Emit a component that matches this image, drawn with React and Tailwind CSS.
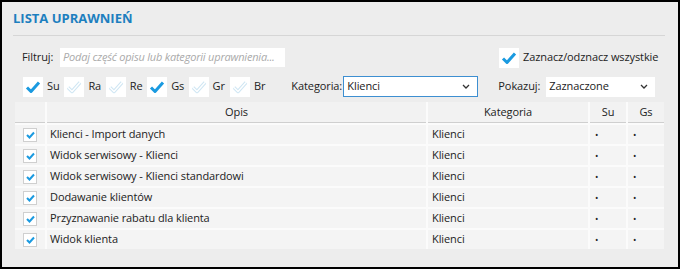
import React from "react";

const font = { fontFamily: '"Open Sans", "Noto Sans", sans-serif' };

const rows = [
  "Klienci - Import danych",
  "Widok serwisowy - Klienci",
  "Widok serwisowy - Klienci standardowi",
  "Dodawanie klientów",
  "Przyznawanie rabatu dla klienta",
  "Widok klienta",
];

const flags = [
  { label: "Su", on: true },
  { label: "Ra", on: false },
  { label: "Re", on: false },
  { label: "Gs", on: true },
  { label: "Gr", on: false },
  { label: "Br", on: false },
];

// big white check box used in the filter bar
const BigCheck = ({ on }) => (
  <div className="w-[20px] h-[20px] bg-white flex items-center justify-center shrink-0">
    <svg width="16" height="14" viewBox="0 0 16 14">
      {on ? (
        <path d="M2 7.5 L6 11.5 L14 2.5" fill="none" stroke="#1a9ae0" strokeWidth="3" strokeLinejoin="round" />
      ) : (
        <>
          <path d="M2 7.5 L6 11.5 L14 2.5" fill="none" stroke="#cfe6f3" strokeWidth="3.4" strokeLinejoin="round" />
          <path d="M2 7.5 L6 11.5 L14 2.5" fill="none" stroke="#ffffff" strokeWidth="1.4" strokeLinejoin="round" />
        </>
      )}
    </svg>
  </div>
);

const SmallCheck = () => (
  <div className="w-[14px] h-[14px] bg-white border border-[#cfcfcf] flex items-center justify-center">
    <svg width="9" height="8" viewBox="0 0 9 8">
      <path d="M1 4 L3.5 6.5 L8 1.5" fill="none" stroke="#1a9ae0" strokeWidth="2" />
    </svg>
  </div>
);

const Chevron = () => (
  <svg width="8" height="5" viewBox="0 0 8 5" className="shrink-0">
    <path d="M1 1 L4 4 L7 1" fill="none" stroke="#333" strokeWidth="1.3" />
  </svg>
);

export default function App() {
  return (
    <div className="w-[682px] h-[270px] bg-white text-[11px] tracking-[-0.1px] text-[#222]" style={font}>
      <div className="w-[680px] h-[269px] border-2 border-black bg-[#ededed] pl-[11px] pr-[13px]">
        {/* Title */}
        <div className="h-[33px] flex items-center">
          <h2 className="text-[13px] font-bold text-[#1d7fbf] tracking-normal">LISTA UPRAWNIEŃ</h2>
        </div>
        <div className="h-px bg-[#d6d6d6]" />

        {/* Filter row */}
        <div className="mt-[11px] h-[21px] flex items-center">
          <span className="ml-[9px] w-[38px] shrink-0">Filtruj:</span>
          <div className="w-[225px] h-[19px] bg-white flex items-center px-[3px] text-[#aaa] italic tracking-[-0.2px] whitespace-nowrap overflow-hidden shrink-0">
            Podaj część opisu lub kategorii uprawnienia...
          </div>
          <div className="ml-[214px] flex items-center gap-[4px]">
            <BigCheck on />
            <span className="whitespace-nowrap">Zaznacz/odznacz wszystkie</span>
          </div>
        </div>

        {/* Flags row */}
        <div className="mt-[8px] h-[21px] flex items-center pl-[10px]">
          {flags.map((f) => (
            <div key={f.label} className="w-[41.4px] flex items-center gap-[4px] shrink-0">
              <BigCheck on={f.on} />
              <span>{f.label}</span>
            </div>
          ))}
          <span className="ml-[20px] w-[52px] whitespace-nowrap shrink-0">Kategoria:</span>
          <div className="w-[135px] h-[21px] bg-white border border-[#3d8fd1] flex items-center justify-between pl-[3px] pr-[7px] shrink-0">
            <span>Klienci</span>
            <Chevron />
          </div>
          <span className="ml-[20px] w-[48px] whitespace-nowrap shrink-0">Pokazuj:</span>
          <div className="w-[109px] h-[20px] bg-white flex items-center justify-between pl-[3px] pr-[7px] shrink-0">
            <span>Zaznaczone</span>
            <Chevron />
          </div>
        </div>

        {/* Table */}
        <div className="mt-[5px] ml-[2px] w-[649px] grid grid-cols-[30px_379px_160px_36px_36px] gap-[2px] bg-[#fbfbfb]">
          <div className="h-[21px] bg-[#f2f2f2] border-b border-[#cfcfcf]" />
          <div className="h-[21px] bg-[#f2f2f2] border-b border-[#cfcfcf] flex items-center justify-center">Opis</div>
          <div className="h-[21px] bg-[#f2f2f2] border-b border-[#cfcfcf] flex items-center justify-center">Kategoria</div>
          <div className="h-[21px] bg-[#f2f2f2] border-b border-[#cfcfcf] flex items-center justify-center">Su</div>
          <div className="h-[21px] bg-[#f2f2f2] border-b border-[#cfcfcf] flex items-center justify-center">Gs</div>
          {rows.map((r) => (
            <React.Fragment key={r}>
              <div className="h-[19px] bg-[#f4f4f4] flex items-center pl-[8px]">
                <SmallCheck />
              </div>
              <div className="h-[19px] bg-[#f4f4f4] flex items-center pl-[3px] whitespace-nowrap">{r}</div>
              <div className="h-[19px] bg-[#f4f4f4] flex items-center pl-[4px]">Klienci</div>
              <div className="h-[19px] bg-[#f4f4f4] flex items-center pl-[5px] text-[9px]">•</div>
              <div className="h-[19px] bg-[#f4f4f4] flex items-center pl-[5px] text-[9px]">•</div>
            </React.Fragment>
          ))}
        </div>
      </div>
    </div>
  );
}
